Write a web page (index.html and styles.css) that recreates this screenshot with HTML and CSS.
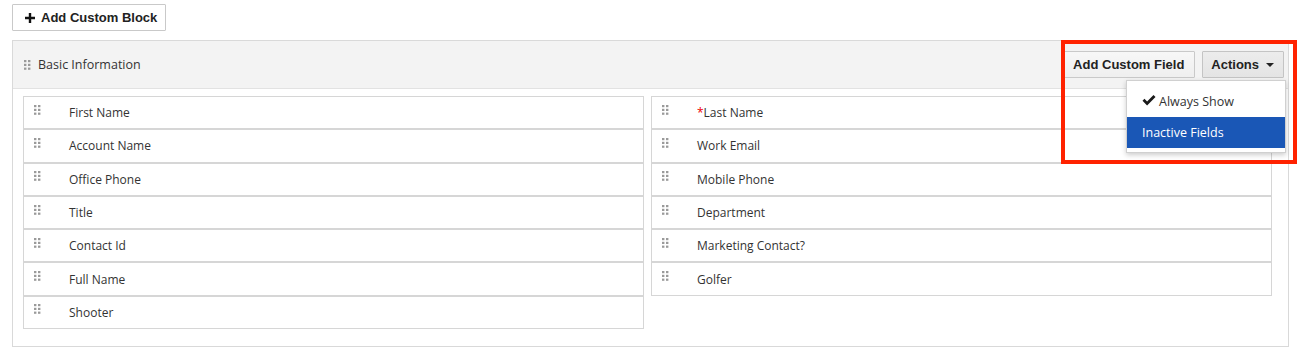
FILE: index.html
```html
<!DOCTYPE html>
<html lang="en">
<head>
  <meta charset="UTF-8" />
  <title>Layout Editor</title>
  <link rel="stylesheet" href="styles.css">
</head>
<body>
  <div class="toolbar">
    <button class="btn btn-block">
      <svg class="plus" width="10" height="10" viewBox="0 0 10 10"><path d="M3.8 0h2.4v3.8H10v2.4H6.2V10H3.8V6.2H0V3.8h3.8z" fill="#111"/></svg>
      Add Custom Block
    </button>
  </div>

  <div class="block">
    <div class="block-head">
      <span class="grip"></span>
      <span class="block-title">Basic Information</span>
      <div class="block-actions">
        <button class="btn">Add Custom Field</button>
        <button class="btn btn-actions">Actions <span class="caret"></span></button>
        <ul class="menu">
          <li>
            <svg class="check" width="14" height="11" viewBox="0 0 14 11"><path d="M0.5 5.8l2-2 2.6 2.6L11.5 0l2 2-8.4 8.4z" fill="#1a1a1a"/></svg>
            Always Show
          </li>
          <li class="active">Inactive Fields</li>
        </ul>
      </div>
    </div>

    <div class="block-body">
      <div class="col">
        <div class="field"><span class="grip"></span>First Name</div>
        <div class="field"><span class="grip"></span>Account Name</div>
        <div class="field"><span class="grip"></span>Office Phone</div>
        <div class="field"><span class="grip"></span>Title</div>
        <div class="field"><span class="grip"></span>Contact Id</div>
        <div class="field"><span class="grip"></span>Full Name</div>
        <div class="field"><span class="grip"></span>Shooter</div>
      </div>
      <div class="col">
        <div class="field"><span class="grip"></span><span class="req">*</span>Last Name</div>
        <div class="field"><span class="grip"></span>Work Email</div>
        <div class="field"><span class="grip"></span>Mobile Phone</div>
        <div class="field"><span class="grip"></span>Department</div>
        <div class="field"><span class="grip"></span>Marketing Contact?</div>
        <div class="field"><span class="grip"></span>Golfer</div>
      </div>
    </div>

    <!-- highlight around the actions area -->
    <div class="highlight"></div>
  </div>
</body>
</html>
```

FILE: styles.css
```css
body {
  margin: 0;
  padding: 4px 12px 0 12px;
  background: #fff;
  color: #333;
  font-family: 'Open Sans', 'Noto Sans', sans-serif;
  font-size: 12px;
}

.toolbar {
  height: 36px;
}

.btn {
  display: inline-flex;
  align-items: center;
  height: 27px;
  box-sizing: border-box;
  padding: 0 10px;
  background: linear-gradient(#f7f7f7, #efefef);
  border: 1px solid #c9c9c9;
  border-radius: 1px;
  color: #222;
  font-family: 'Liberation Sans', Arial, sans-serif;
  font-weight: 700;
  font-size: 13px;
  white-space: nowrap;
  cursor: pointer;
}

.btn-block {
  padding: 0 8px 0 12px;
  background: #fff;
}

.plus {
  flex-shrink: 0;
  margin-right: 6px;
}

.block {
  position: relative;
  width: 1277px;
  box-sizing: border-box;
  border: 1px solid #d9d9d9;
  padding-bottom: 17px;
}

.block-head {
  display: flex;
  align-items: center;
  height: 47px;
  padding-left: 11px;
  background: #f3f3f3;
  border-bottom: 1px solid #e2e2e2;
}

.block-title {
  font-size: 12.5px;
  color: #333;
}

/* six-dot drag handle */
.grip {
  display: inline-block;
  flex-shrink: 0;
  width: 7px;
  height: 10px;
  margin-right: 7px;
  background-image: url("data:image/svg+xml,%3Csvg xmlns='http://www.w3.org/2000/svg' width='7' height='10'%3E%3Cg fill='%239a9a9a'%3E%3Crect x='0' y='0' width='2.4' height='2.2'/%3E%3Crect x='4' y='0' width='2.4' height='2.2'/%3E%3Crect x='0' y='3.8' width='2.4' height='2.2'/%3E%3Crect x='4' y='3.8' width='2.4' height='2.2'/%3E%3Crect x='0' y='7.6' width='2.4' height='2.2'/%3E%3Crect x='4' y='7.6' width='2.4' height='2.2'/%3E%3C/g%3E%3C/svg%3E");
}

.field .grip {
  margin-right: 28px;
  position: relative;
  top: -3px;
}

.block-actions {
  position: relative;
  display: flex;
  gap: 7px;
  margin-left: auto;
  margin-right: 4px;
}

.btn-actions {
  padding: 0 9px 0 8px;
  background: linear-gradient(#ececec, #e4e4e4);
  border-color: #c4c4c4;
}

.caret {
  display: inline-block;
  margin-left: 7px;
  border-left: 4px solid transparent;
  border-right: 4px solid transparent;
  border-top: 4px solid #222;
}

.menu {
  position: absolute;
  top: 29px;
  right: -2px;
  width: 160px;
  box-sizing: border-box;
  margin: 0;
  padding: 4px 0 4px 0;
  list-style: none;
  background: #fff;
  border: 1px solid #d0d0d0;
  box-shadow: 0 2px 5px rgba(0, 0, 0, 0.2);
  z-index: 2;
}

.menu li {
  height: 32px;
  display: flex;
  align-items: center;
  padding-left: 15px;
  font-size: 12.5px;
  color: #333;
}

.menu li.active {
  height: 31px;
  background: #1a57b6;
  color: #fff;
}

.check {
  margin-right: 3px;
  position: relative;
  top: -1px;
}

.block-body {
  display: grid;
  grid-template-columns: 621px 621px;
  column-gap: 7px;
  padding: 7px 0 0 10px;
  align-items: start;
}

.field {
  display: flex;
  align-items: center;
  height: 33.3px;
  box-sizing: border-box;
  border: 1px solid #d6d6d6;
  padding-left: 10px;
  color: #333;
}

.req {
  color: #e00;
}

.highlight {
  position: absolute;
  left: 1048px;
  top: -1px;
  width: 236px;
  height: 124px;
  box-sizing: border-box;
  border: 4px solid #ff2200;
  pointer-events: none;
  z-index: 3;
}
```
